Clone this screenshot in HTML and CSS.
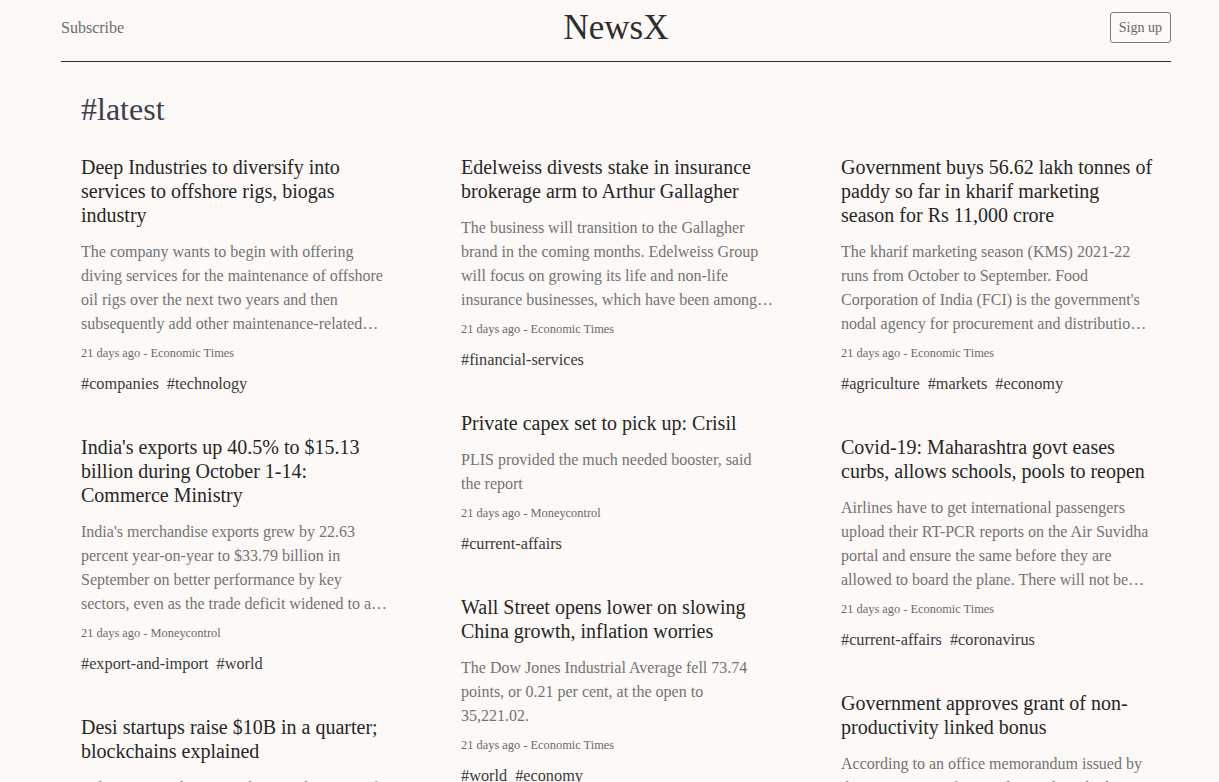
FILE: index.html
```html
<!DOCTYPE html>
<html lang="en">
<head>
<meta charset="utf-8">
<title>NewsX</title>
<link rel="stylesheet" href="styles.css">
</head>
<body>
<div class="container">
  <header class="masthead">
    <a class="subscribe" href="#">Subscribe</a>
    <h1 class="brand">NewsX</h1>
    <div class="actions"><a class="btn-signup" href="#">Sign up</a></div>
  </header>
  <main class="content">
    <h2 class="section-title">#latest</h2>
    <div class="grid">
      <div class="col">
        <article class="card">
          <h3 class="card-title">Deep Industries to diversify into services to offshore rigs, biogas industry</h3>
          <p class="card-desc">The company wants to begin with offering diving services for the maintenance of offshore oil rigs over the next two years and then subsequently add other maintenance-related services such as repair and inspection to its portfolio.</p>
          <p class="card-meta">21 days ago - Economic Times</p>
          <div class="tags"><a href="#">#companies</a><a href="#">#technology</a></div>
        </article>
        <article class="card">
          <h3 class="card-title">India's exports up 40.5% to $15.13 billion during October 1-14: Commerce Ministry</h3>
          <p class="card-desc">India's merchandise exports grew by 22.63 percent year-on-year to $33.79 billion in September on better performance by key sectors, even as the trade deficit widened to a record high.</p>
          <p class="card-meta">21 days ago - Moneycontrol</p>
          <div class="tags"><a href="#">#export-and-import</a><a href="#">#world</a></div>
        </article>
        <article class="card">
          <h3 class="card-title">Desi startups raise $10B in a quarter; blockchains explained</h3>
          <p class="card-desc">Indian startups have raised a record amount of funding in the quarter and here is what blockchains are all about.</p>
          <p class="card-meta">21 days ago - Economic Times</p>
          <div class="tags"><a href="#">#startups</a></div>
        </article>
      </div>
      <div class="col">
        <article class="card">
          <h3 class="card-title">Edelweiss divests stake in insurance brokerage arm to Arthur Gallagher</h3>
          <p class="card-desc">The business will transition to the Gallagher brand in the coming months. Edelweiss Group will focus on growing its life and non-life insurance businesses, which have been among the fastest growing in the industry.</p>
          <p class="card-meta">21 days ago - Economic Times</p>
          <div class="tags"><a href="#">#financial-services</a></div>
        </article>
        <article class="card">
          <h3 class="card-title">Private capex set to pick up: Crisil</h3>
          <p class="card-desc">PLIS provided the much needed booster, said the report</p>
          <p class="card-meta">21 days ago - Moneycontrol</p>
          <div class="tags"><a href="#">#current-affairs</a></div>
        </article>
        <article class="card">
          <h3 class="card-title">Wall Street opens lower on slowing China growth, inflation worries</h3>
          <p class="card-desc">The Dow Jones Industrial Average fell 73.74 points, or 0.21 per cent, at the open to 35,221.02.</p>
          <p class="card-meta">21 days ago - Economic Times</p>
          <div class="tags"><a href="#">#world</a><a href="#">#economy</a></div>
        </article>
      </div>
      <div class="col">
        <article class="card">
          <h3 class="card-title">Government buys 56.62 lakh tonnes of paddy so far in kharif marketing season for Rs 11,000 crore</h3>
          <p class="card-desc">The kharif marketing season (KMS) 2021-22 runs from October to September. Food Corporation of India (FCI) is the government's nodal agency for procurement and distribution of food grains.</p>
          <p class="card-meta">21 days ago - Economic Times</p>
          <div class="tags"><a href="#">#agriculture</a><a href="#">#markets</a><a href="#">#economy</a></div>
        </article>
        <article class="card">
          <h3 class="card-title">Covid-19: Maharashtra govt eases curbs, allows schools, pools to reopen</h3>
          <p class="card-desc">Airlines have to get international passengers upload their RT-PCR reports on the Air Suvidha portal and ensure the same before they are allowed to board the plane. There will not be any quarantine requirement.</p>
          <p class="card-meta">21 days ago - Economic Times</p>
          <div class="tags"><a href="#">#current-affairs</a><a href="#">#coronavirus</a></div>
        </article>
        <article class="card">
          <h3 class="card-title">Government approves grant of non-productivity linked bonus</h3>
          <p class="card-desc">According to an office memorandum issued by the Department of Expenditure, the calculation ceiling will be Rs 7,000 per month.</p>
          <p class="card-meta">21 days ago - Economic Times</p>
          <div class="tags"><a href="#">#economy</a></div>
        </article>
      </div>
    </div>
  </main>
</div>
</body>
</html>
```

FILE: styles.css
```css
* { box-sizing: border-box; }

html, body {
  margin: 0;
  padding: 0;
  background: #fcf9f6;
}

body {
  font-family: "Liberation Serif", "DejaVu Serif", serif;
  color: #2f2f2f;
  overflow: hidden;
}

a { text-decoration: none; color: inherit; }

.container {
  width: 1110px;
  margin: 0 0 0 61px;
}

.masthead {
  display: grid;
  grid-template-columns: 1fr auto 1fr;
  align-items: center;
  height: 62px;
  border-bottom: 1px solid #2e2e2e;
  padding-bottom: 6px;
}

.subscribe {
  font-size: 16px;
  color: #6b6b6b;
}

.brand {
  margin: 0;
  font-size: 35px;
  font-weight: 400;
  color: #2d2d2d;
  line-height: 1;
}

.actions {
  display: flex;
  justify-content: flex-end;
}

.btn-signup {
  display: inline-flex;
  align-items: center;
  height: 31px;
  padding: 0 8px;
  border: 1px solid #7a7a7a;
  border-radius: 3px;
  font-size: 14px;
  color: #666;
}

.content {
  padding: 0 20px;
}

.section-title {
  margin: 27px 0 26px;
  height: 40px;
  line-height: 40px;
  font-size: 32px;
  font-weight: 400;
  color: #3b404c;
}

.grid {
  display: grid;
  grid-template-columns: repeat(3, 312px);
  column-gap: 68px;
}

.col {
  display: flex;
  flex-direction: column;
  gap: 39px;
}

.card-title {
  margin: 0;
  font-size: 20px;
  line-height: 24px;
  font-weight: 400;
  color: #262626;
}

.card-desc {
  margin: 13px 0 0;
  font-size: 16px;
  line-height: 24px;
  color: #737373;
  display: -webkit-box;
  -webkit-box-orient: vertical;
  -webkit-line-clamp: 4;
  overflow: hidden;
}

.card-meta {
  margin: 8px 0 0;
  font-size: 12.4px;
  line-height: 18px;
  color: #6a6a6a;
}

.tags {
  margin-top: 10px;
  display: flex;
  gap: 8px;
  font-size: 16.3px;
  line-height: 24px;
  color: #3a3a3a;
}
```
